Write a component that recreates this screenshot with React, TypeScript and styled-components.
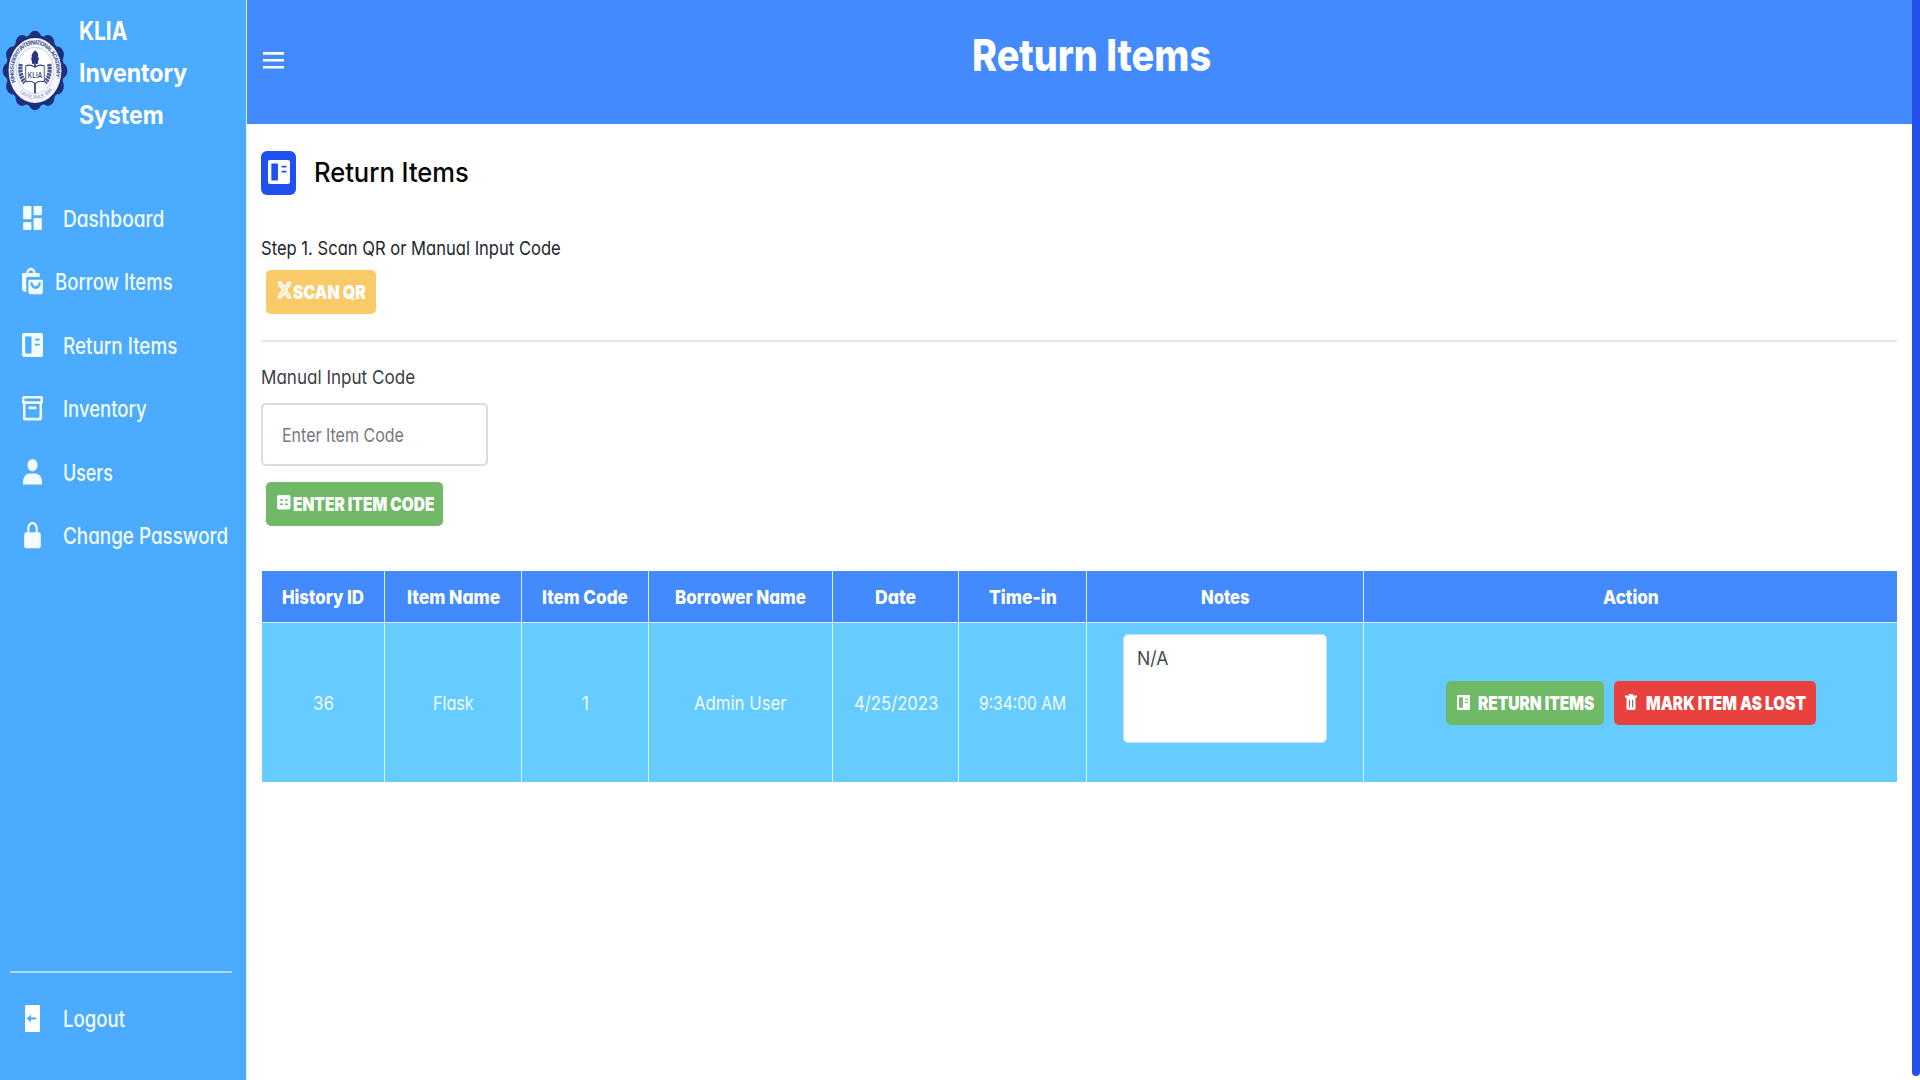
import React, { useLayoutEffect, useRef, useState } from "react";
import styled, { createGlobalStyle } from "styled-components";
import { BiSolidDashboard, BiSolidLockAlt, BiSolidShoppingBags } from "react-icons/bi";

const GlobalStyle = createGlobalStyle`
  * { box-sizing: border-box; }
  body {
    margin: 0;
    background: #fff;
    overflow: hidden;
    font-family: Inter, "Open Sans", sans-serif;
    font-feature-settings: "cv11" 1;
    font-size: 19.3px;
    color: #23272f;
  }
`;

/* ---------- condensed text ---------- */

const TextBox = styled.span<{ $w: number }>`
  display: inline-block;
  flex: none;
  width: ${(p) => p.$w}px;
  white-space: nowrap;
  text-align: left;
`;

const TextInner = styled.span`
  display: inline-block;
  transform-origin: 0 50%;
`;

/** Condenses its text horizontally so that it is exactly `w` pixels wide. */
function Condensed({ w, children }: { w: number; children: string }) {
  const ref = useRef<HTMLSpanElement>(null);
  const [scale, setScale] = useState(1);
  useLayoutEffect(() => {
    if (ref.current) setScale(w / ref.current.offsetWidth);
  }, [w, children]);
  return (
    <TextBox $w={w}>
      <TextInner ref={ref} style={{ transform: `scaleX(${scale})` }}>
        {children}
      </TextInner>
    </TextBox>
  );
}

/* ---------- icons ---------- */

function ReturnIcon({ width, height }: { width: number; height: number }) {
  return (
    <svg width={width} height={height} viewBox="0 0 21 24" preserveAspectRatio="none">
      <path
        fill="currentColor"
        fillRule="evenodd"
        d="M2 0h17A2 2 0 0 1 21 2v20a2 2 0 0 1-2 2h-17A2 2 0 0 1 0 22v-20A2 2 0 0 1 2 0ZM3.200 3.600v16.800h6.300V3.600ZM13 5.800v1.800h4.700V5.800ZM13 10.800v1.800h4.700v-1.800Z"
      />
    </svg>
  );
}

function ArchiveIcon() {
  return (
    <svg width="21" height="25" viewBox="0 0 21 25">
      <path
        fill="currentColor"
        fillRule="evenodd"
        d="M2 0h17a2 2 0 0 1 2 2v4a2 2 0 0 1-1 1.700V22.500a2 2 0 0 1-2 2H3a2 2 0 0 1-2-2V7.700A2 2 0 0 1 0 6V2a2 2 0 0 1 2-2ZM2.500 2.600v2.600h16V2.600ZM3.500 8v13.700h14V8ZM6.500 10.500h8v2.700h-8Z"
      />
    </svg>
  );
}

function UserIcon() {
  return (
    <svg width="19" height="26" viewBox="0 0 19 26">
      <ellipse cx="9.500" cy="6.200" rx="5" ry="6.200" fill="currentColor" />
      <path fill="currentColor" d="M0 25.500v-2.500c0-5 3-8.500 6.500-8.500h6c3.500 0 6.500 3.500 6.500 8.500v2.500z" />
    </svg>
  );
}

function LogoutIcon() {
  return (
    <svg width="15" height="27" viewBox="0 0 15 27">
      <rect width="15" height="27" rx="1.200" fill="#fff" />
      <path d="M1.500 13.500 6 9.800v2.700h5v2H6v2.700z" fill="#4aabff" />
    </svg>
  );
}

function MenuIcon() {
  return (
    <svg width="21" height="17" viewBox="0 0 21 17">
      <path d="M0 1.400h21M0 8.300h21M0 15.200h21" stroke="#fff" strokeWidth="2.600" />
    </svg>
  );
}

function ScanIcon() {
  return (
    <svg width="15" height="18" viewBox="0 0 15 18" fill="none" stroke="#fff">
      <path
        d="M1 1.500 4 1l3.500 5L11 1l3 .5-4.500 7.500 4.500 7.500-3 .5-3.500-5L4 17l-3-.5L5.500 9z"
        strokeWidth="1.300"
        fill="#fff"
        fillOpacity=".6"
      />
      <path d="M1 5.500h4M10 5.500h4M1 12.500h3" strokeWidth="1" strokeOpacity=".7" />
    </svg>
  );
}

function CodeIcon() {
  return (
    <svg width="13.500" height="14.500" viewBox="0 0 14 15">
      <rect width="14" height="15" rx="2" fill="#fff" />
      <path d="M3.200 5.200h2.800M8.200 5.200h2.800M3 9.600h3.200M8 9.600h3.200" stroke="#6fb967" strokeWidth="1.400" />
    </svg>
  );
}

function TrashIcon() {
  return (
    <svg width="12" height="16" viewBox="0 0 12 16">
      <path
        fill="#fff"
        fillRule="evenodd"
        d="M4 0h4v1.500h4v1.900h-1.500V14.600a1.300 1.300 0 0 1-1.300 1.300H2.800A1.300 1.300 0 0 1 1.500 14.600V3.400H0V1.500h4ZM4 6v7.300h1V6ZM7 6v7.300h1V6Z"
      />
    </svg>
  );
}

const SealSvg = styled.svg`
  display: block;
  flex: none;
  margin-top: 30px;
`;

function Seal() {
  const points = Array.from({ length: 12 }, (_, i) => {
    const a = (i * Math.PI) / 6 - Math.PI / 2;
    return [50 + 39 * Math.cos(a), 50 + 39 * Math.sin(a)];
  });
  return (
    <SealSvg width="66" height="81" viewBox="0 0 100 100" preserveAspectRatio="none">
      <defs>
        <path id="sealTop" d="M20.500 64A32.500 32.500 0 1 1 79.500 64" />
        <path id="sealBottom" d="M19 68A36.500 36.500 0 0 0 81 68" />
      </defs>
      <circle cx="50" cy="50" r="44" fill="#1d2f7c" />
      {points.map(([x, y], i) => (
        <circle key={i} cx={x} cy={y} r="10" fill="#1d2f7c" />
      ))}
      <circle cx="50" cy="50" r="40" fill="#f4f7fd" />
      <circle cx="50" cy="50" r="28.500" fill="#fff" stroke="#a9b3d6" strokeWidth=".8" />
      <text fontSize="7.500" fontWeight="700" fill="#4a568e">
        <textPath href="#sealTop" textLength="124">KINGS LEIGHT INTERNATIONAL ACADEMY</textPath>
      </text>
      <text fontSize="6" fill="#7c88b5">
        <textPath href="#sealBottom" startOffset="12" textLength="54">CAVITE, PHILS. 1995</textPath>
      </text>
      <path d="M50 25c5 3 6 6 4 9h2l-2 8h-8l-2-8h2c-3-4 1-5 4-9Z" fill="#26357c" />
      <path d="M48.500 40h3v38h-3z" fill="#45528f" />
      <path d="M36 44q8-2 14 2 6-4 14-2v20q-8-2-14 2-6-4-14-2Z" fill="#fff" stroke="#33417f" strokeWidth="1.300" />
      <text x="39" y="59" fontSize="9.500" fontWeight="500" fill="#26357c" textLength="22">
        KLIA
      </text>
      <path
        d="M28.500 42q-3 13 6 23M71.500 42q3 13-6 23"
        fill="none"
        stroke="#4a568e"
        strokeWidth="6.500"
        strokeDasharray="3 .8"
      />
    </SealSvg>
  );
}

/* ---------- layout ---------- */

const Page = styled.div`
  display: flex;
  width: 1920px;
  height: 1080px;
  background: #fff;
`;

const Sidebar = styled.aside`
  display: flex;
  flex-direction: column;
  width: 247px;
  flex: none;
  background: #4aabff;
  border-right: 1px solid #d9f0ff;
  color: #fff;
`;

const Brand = styled.div`
  display: flex;
  gap: 11px;
  height: 187px;
  padding-left: 2px;
`;

const BrandName = styled.div`
  display: flex;
  flex-direction: column;
  padding-top: 10px;
  font-size: 25.700px;
  font-weight: 650;
  line-height: 42px;
`;

const Nav = styled.nav`
  display: flex;
  flex-direction: column;
`;

const NavItem = styled.a<{ $gap?: number }>`
  display: flex;
  align-items: center;
  gap: ${(p) => p.$gap ?? 18}px;
  height: 63.500px;
  padding-left: 20px;
  font-size: 22.500px;
  font-weight: 450;
  line-height: 30px;
  color: #f2fbff;
`;

const NavIcon = styled.span`
  display: flex;
  align-items: center;
  justify-content: center;
  width: 25px;
  height: 32px;
  flex: none;
  margin-top: -2px;
`;

const TallIcon = styled.span<{ $w?: number }>`
  display: flex;
  flex: none;

  svg {
    width: ${(p) => p.$w ?? 25}px;
    height: 32px;
  }
`;

const SidebarFooter = styled.div`
  margin: auto 14px 29px 10px;
  border-top: 2px solid #a9dcff;
  padding-top: 15px;

  ${NavItem} {
    padding-left: 10px;
  }
`;

const Main = styled.main`
  flex: 1;
  display: flex;
  flex-direction: column;
`;

const Header = styled.header`
  display: flex;
  height: 124px;
  padding: 0 13px 0 16px;
  background: #438aff;
  color: #fff;
`;

const MenuButton = styled.div`
  height: 17px;
  margin-top: 52px;
  display: flex;
`;

const HeaderTitle = styled.h1`
  flex: 1;
  margin: 0;
  padding: 25px 0 0 0;
  text-align: center;
  font-size: 44px;
  font-weight: 800;
  line-height: 60px;
`;

const Content = styled.section`
  display: flex;
  flex-direction: column;
  align-items: flex-start;
  padding: 27px 15px 0 14px;
`;

const TitleRow = styled.div`
  display: flex;
  align-items: center;
  gap: 18px;
  height: 44px;
  font-size: 27px;
  font-weight: 450;
  line-height: 44px;
  color: #050505;
`;

const TitleBadge = styled.span`
  display: flex;
  align-items: center;
  justify-content: center;
  width: 35px;
  height: 44px;
  padding-bottom: 2px;
  border-radius: 6px;
  background: #2050ee;
  color: #fff;
`;

const Label = styled.div<{ $top: number; $color?: string }>`
  margin-top: ${(p) => p.$top}px;
  height: 30px;
  line-height: 30px;
  color: ${(p) => p.$color ?? "#23272f"};
`;

const Button = styled.button<{ $bg: string; $w: number; $gap?: number; $lift?: number }>`
  display: flex;
  align-items: center;
  gap: ${(p) => p.$gap ?? 2}px;
  width: ${(p) => p.$w}px;
  height: 44px;
  flex: none;
  padding: 0 0 0 11px;
  border: 0;
  border-radius: 5px;
  background: ${(p) => p.$bg};
  color: #fff;
  font: inherit;
  font-feature-settings: inherit;
  font-weight: 900;
  line-height: 24px;

  svg {
    display: block;
    flex: none;
    margin-bottom: ${(p) => p.$lift ?? 0}px;
  }
`;

const ButtonSlot = styled.div<{ $top: number }>`
  margin: ${(p) => p.$top}px 0 0 5px;
`;

const Divider = styled.hr`
  width: 100%;
  height: 2px;
  margin: 26px 0 0;
  border: 0;
  background: #e8e8e8;
`;

const CodeField = styled.div`
  display: flex;
  align-items: center;
  width: 227px;
  height: 63px;
  margin-top: 11px;
  padding-left: 19px;
  border: 2px solid #dcdadd;
  border-radius: 5px;
  color: #777a80;
`;

const Table = styled.div`
  display: grid;
  grid-template-columns: 123px 137px 127px 184px 126px 128px 277px 533px;
  width: 1635px;
  margin: 45px 0 0 1px;
  background: #d8f2ff;
`;

const Cell = styled.div<{ $head?: boolean }>`
  display: flex;
  align-items: center;
  justify-content: center;
  gap: 10px;
  height: ${(p) => (p.$head ? 51 : 159)}px;
  margin-top: ${(p) => (p.$head ? 0 : 1)}px;
  background: ${(p) => (p.$head ? "#438aff" : "#66ccff")};
  border-right: 1px solid #d8f2ff;
  color: ${(p) => (p.$head ? "#fff" : "#effbff")};
  font-weight: ${(p) => (p.$head ? 800 : 400)};
  line-height: 24px;

  &:nth-child(8n) {
    border-right: 0;
  }
`;

const NoteCell = styled(Cell)`
  align-items: flex-start;
  padding-top: 11px;
`;

const NoteBox = styled.div`
  width: 204px;
  height: 109px;
  padding: 11px 0 0 13px;
  border: 1px solid #c9dfeb;
  border-radius: 5px;
  background: #fff;
  color: #454b54;
`;

const ScrollStrip = styled.div`
  width: 8px;
  height: 1076px;
  flex: none;
  border-radius: 0 0 4px 4px;
  background: #2451ec;
`;

/* ---------- data ---------- */

const links = [
  { label: "Dashboard", w: 101, icon: <TallIcon><BiSolidDashboard preserveAspectRatio="none" /></TallIcon> },
  { label: "Borrow Items", w: 118, gap: 10, icon: <TallIcon><BiSolidShoppingBags preserveAspectRatio="none" /></TallIcon> },
  { label: "Return Items", w: 114, icon: <ReturnIcon width={21} height={24} /> },
  { label: "Inventory", w: 84, icon: <ArchiveIcon /> },
  { label: "Users", w: 50, icon: <UserIcon /> },
  { label: "Change Password", w: 165, icon: <TallIcon><BiSolidLockAlt preserveAspectRatio="none" /></TallIcon> },
];

const columns: [string, number][] = [
  ["History ID", 82],
  ["Item Name", 93],
  ["Item Code", 86],
  ["Borrower Name", 131],
  ["Date", 41],
  ["Time-in", 68],
  ["Notes", 49],
  ["Action", 56],
];

const record: [string, number][] = [
  ["36", 21],
  ["Flask", 41],
  ["1", 7],
  ["Admin User", 93],
  ["4/25/2023", 84],
  ["9:34:00 AM", 87],
];

export default function App() {
  return (
    <Page>
      <GlobalStyle />
      <Sidebar>
        <Brand>
          <Seal />
          <BrandName>
            <Condensed w={48}>KLIA</Condensed>
            <Condensed w={108}>Inventory</Condensed>
            <Condensed w={85}>System</Condensed>
          </BrandName>
        </Brand>
        <Nav>
          {links.map((l) => (
            <NavItem key={l.label} $gap={l.gap}>
              <NavIcon>{l.icon}</NavIcon>
              <Condensed w={l.w}>{l.label}</Condensed>
            </NavItem>
          ))}
        </Nav>
        <SidebarFooter>
          <NavItem>
            <NavIcon>
              <LogoutIcon />
            </NavIcon>
            <Condensed w={62}>Logout</Condensed>
          </NavItem>
        </SidebarFooter>
      </Sidebar>

      <Main>
        <Header>
          <MenuButton>
            <MenuIcon />
          </MenuButton>
          <HeaderTitle>
            <Condensed w={239}>Return Items</Condensed>
          </HeaderTitle>
        </Header>

        <Content>
          <TitleRow>
            <TitleBadge>
              <ReturnIcon width={22} height={24} />
            </TitleBadge>
            <Condensed w={155}>Return Items</Condensed>
          </TitleRow>

          <Label $top={38}>
            <Condensed w={300}>Step 1. Scan QR or Manual Input Code</Condensed>
          </Label>
          <ButtonSlot $top={7}>
            <Button $bg="#fbca68" $w={110} $gap={1} $lift={4}>
              <ScanIcon />
              <Condensed w={73}>SCAN QR</Condensed>
            </Button>
          </ButtonSlot>

          <Divider />

          <Label $top={20} $color="#3b3f48">
            <Condensed w={154}>Manual Input Code</Condensed>
          </Label>
          <CodeField>
            <Condensed w={122}>Enter Item Code</Condensed>
          </CodeField>
          <ButtonSlot $top={16}>
            <Button $bg="#6fb967" $w={177} $lift={3}>
              <CodeIcon />
              <Condensed w={141}>ENTER ITEM CODE</Condensed>
            </Button>
          </ButtonSlot>

          <Table>
            {columns.map(([name, w]) => (
              <Cell $head key={name}>
                <Condensed w={w}>{name}</Condensed>
              </Cell>
            ))}
            {record.map(([value, w], i) => (
              <Cell key={i}>
                <Condensed w={w}>{value}</Condensed>
              </Cell>
            ))}
            <NoteCell>
              <NoteBox>
                <Condensed w={31}>N/A</Condensed>
              </NoteBox>
            </NoteCell>
            <Cell>
              <Button $bg="#6fb967" $w={158} $gap={8} $lift={1}>
                <ReturnIcon width={13} height={15} />
                <Condensed w={116}>RETURN ITEMS</Condensed>
              </Button>
              <Button $bg="#e8413e" $w={202} $gap={9} $lift={1}>
                <TrashIcon />
                <Condensed w={160}>MARK ITEM AS LOST</Condensed>
              </Button>
            </Cell>
          </Table>
        </Content>
      </Main>
      <ScrollStrip />
    </Page>
  );
}
